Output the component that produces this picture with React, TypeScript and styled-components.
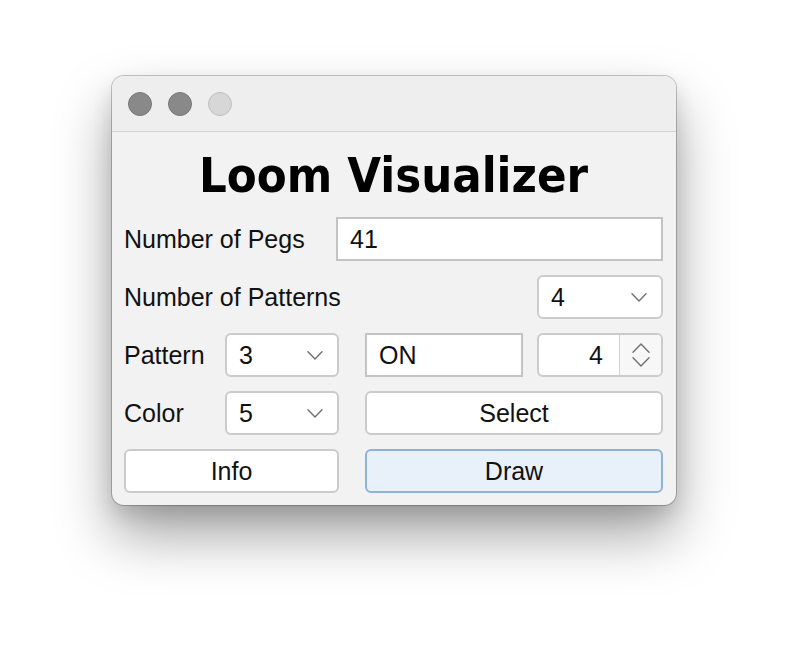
import React from "react";
import styled, { createGlobalStyle } from "styled-components";

const GlobalStyle = createGlobalStyle`
  html, body { margin: 0; padding: 0; background: #ffffff; }
  body { font-family: "Liberation Sans", Arial, sans-serif; color: #111111; }
  * { box-sizing: border-box; }
`;

const Page = styled.div`
  display: flex;
  justify-content: center;
  padding-top: 76px;
  height: 654px;
`;

const Window = styled.div`
  width: 564px;
  height: 429px;
  border-radius: 12px;
  background: #f2f2f2;
  overflow: hidden;
  box-shadow: 0 0 0 1px rgba(0, 0, 0, 0.22), 0 30px 56px rgba(0, 0, 0, 0.36),
    0 10px 20px rgba(0, 0, 0, 0.12);
  display: flex;
  flex-direction: column;
`;

const TitleBar = styled.div`
  height: 56px;
  flex: none;
  background: #eeeeef;
  border-bottom: 1px solid #d3d3d4;
  display: flex;
  align-items: center;
  gap: 16px;
  padding: 0 0 0 16px;
`;

const Light = styled.span<{ $dim?: boolean }>`
  width: 24px;
  height: 24px;
  border-radius: 50%;
  background: ${(p) => (p.$dim ? "#d7d7d8" : "#898989")};
  border: 1px solid ${(p) => (p.$dim ? "#bfbfc0" : "#787878")};
`;

const Content = styled.div`
  flex: 1;
  display: flex;
  flex-direction: column;
  gap: 14px;
  padding: 0 13px 12px 12px;
`;

const Heading = styled.h1`
  margin: 19px 0 4px;
  font-family: "DejaVu Sans", "Liberation Sans", sans-serif;
  font-weight: 700;
  font-stretch: condensed;
  font-size: 48.5px;
  line-height: 48px;
  text-align: center;
  color: #000000;
`;

const Row = styled.div`
  height: 44px;
  display: flex;
  align-items: center;
  justify-content: space-between;
`;

const Grid = styled.div`
  display: grid;
  grid-template-columns: 215px minmax(0, 1fr);
  grid-auto-rows: 44px;
  column-gap: 26px;
  row-gap: 14px;
`;

const Cell = styled.div<{ $gap?: number }>`
  min-width: 0;
  display: flex;
  align-items: center;
  justify-content: space-between;
  gap: ${(p) => p.$gap ?? 0}px;
`;

const Label = styled.span`
  font-size: 25px;
  color: #111111;
  white-space: nowrap;
`;

const TextField = styled.input<{ $width?: number }>`
  width: ${(p) => (p.$width ? `${p.$width}px` : "0")};
  flex: ${(p) => (p.$width ? "none" : "1 1 0")};
  min-width: 0;
  height: 44px;
  border: 2px solid #c3c3c3;
  border-radius: 0;
  background: #ffffff;
  padding: 0 12px;
  font-family: "Liberation Sans", Arial, sans-serif;
  font-size: 25px;
  color: #111111;
  outline: none;
`;

const ComboBox = styled.div<{ $width: number }>`
  width: ${(p) => p.$width}px;
  height: 44px;
  flex: none;
  display: flex;
  align-items: center;
  justify-content: space-between;
  padding: 0 14px 0 12px;
  background: #ffffff;
  border: 2px solid #cbcbcb;
  border-radius: 6px;
  font-size: 25px;
  color: #111111;
`;

const Spinner = styled.div`
  width: 126px;
  height: 44px;
  flex: none;
  display: flex;
  background: #ffffff;
  border: 2px solid #cbcbcb;
  border-radius: 6px;
  overflow: hidden;
`;

const SpinValue = styled.span`
  flex: 1;
  display: flex;
  align-items: center;
  justify-content: flex-end;
  padding-right: 16px;
  font-size: 25px;
  color: #111111;
`;

const SpinArrows = styled.div`
  width: 42px;
  flex: none;
  display: flex;
  flex-direction: column;
  align-items: center;
  justify-content: center;
  gap: 4px;
  background: #f7f7f7;
  border-left: 1px solid #d2d2d2;
`;

const Button = styled.button<{ $primary?: boolean }>`
  width: 100%;
  height: 44px;
  border: 2px solid ${(p) => (p.$primary ? "#8eb2da" : "#cbcbcb")};
  border-radius: 6px;
  background: ${(p) => (p.$primary ? "#e8f0fa" : "#ffffff")};
  font-family: "Liberation Sans", Arial, sans-serif;
  font-size: 25px;
  color: #111111;
  padding: 0;
  cursor: default;
`;

const Chevron = ({ up, w = 16, h = 9 }: { up?: boolean; w?: number; h?: number }) => (
  <svg width={w} height={h} viewBox={`0 0 ${w} ${h}`} fill="none">
    <polyline
      points={
        up
          ? `1,${h - 0.8} ${w / 2},1 ${w - 1},${h - 0.8}`
          : `1,0.8 ${w / 2},${h - 1} ${w - 1},0.8`
      }
      stroke="#707070"
      strokeWidth="1.4"
      strokeLinecap="round"
      strokeLinejoin="round"
    />
  </svg>
);

const Combo = ({ value, width }: { value: string; width: number }) => (
  <ComboBox $width={width}>
    <span>{value}</span>
    <Chevron />
  </ComboBox>
);

export default function App() {
  return (
    <>
      <GlobalStyle />
      <Page>
        <Window>
          <TitleBar>
            <Light />
            <Light />
            <Light $dim />
          </TitleBar>
          <Content>
            <Heading>Loom Visualizer</Heading>
            <Row>
              <Label>Number of Pegs</Label>
              <TextField $width={327} defaultValue="41" />
            </Row>
            <Row>
              <Label>Number of Patterns</Label>
              <Combo value="4" width={126} />
            </Row>
            <Grid>
              <Cell>
                <Label>Pattern</Label>
                <Combo value="3" width={114} />
              </Cell>
              <Cell $gap={14}>
                <TextField defaultValue="ON" />
                <Spinner>
                  <SpinValue>4</SpinValue>
                  <SpinArrows>
                    <Chevron up w={18} h={10} />
                    <Chevron w={18} h={10} />
                  </SpinArrows>
                </Spinner>
              </Cell>
              <Cell>
                <Label>Color</Label>
                <Combo value="5" width={114} />
              </Cell>
              <Cell>
                <Button>Select</Button>
              </Cell>
              <Cell>
                <Button>Info</Button>
              </Cell>
              <Cell>
                <Button $primary>Draw</Button>
              </Cell>
            </Grid>
          </Content>
        </Window>
      </Page>
    </>
  );
}
